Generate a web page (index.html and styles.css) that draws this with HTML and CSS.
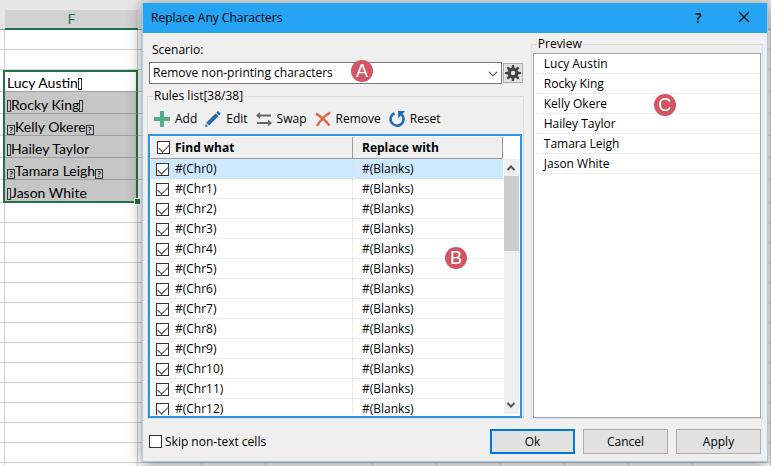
FILE: index.html
```html
<!DOCTYPE html>
<html lang="en">

<head>
    <meta charset="UTF-8">
    <meta name="viewport" content="width=device-width, initial-scale=1.0">
    <title>Replace Any Characters</title>
    <link rel="stylesheet" href="styles.css">
</head>

<body>
    <!-- Worksheet behind the dialog -->
    <table class="sheet">
        <thead>
            <tr>
                <th class="edge"></th>
                <th class="col-f">F</th>
                <th class="col"></th>
                <th class="col"></th>
                <th class="col-wide"></th>
                <th class="col"></th>
                <th class="col"></th>
                <th class="col"></th>
                <th class="col"></th>
                <th class="col"></th>
                <th></th>
            </tr>
        </thead>
        <tbody id="sheetRows"></tbody>
    </table>

    <div class="dialog" role="dialog" aria-labelledby="dialogTitle">
        <div class="title-bar">
            <span class="title" id="dialogTitle">Replace Any Characters</span>
            <button type="button" class="title-button help">?</button>
            <button type="button" class="title-button" aria-label="Close">
                <svg width="12" height="12" viewBox="0 0 12 12"><path d="M1 1L11 11M11 1L1 11" fill="none" stroke="#111" stroke-width="1.2"/></svg>
            </button>
        </div>

        <form class="content" id="replaceForm">
            <div class="panels">
                <div class="left-panel">
                    <label for="scenario">Scenario:</label>
                    <div class="scenario-row">
                        <div class="select-wrap">
                            <select id="scenario" name="scenario">
                                <option>Remove non-printing characters</option>
                            </select>
                            <svg class="arrow" width="10" height="6" viewBox="0 0 10 6"><path d="M1 .8L5 4.8L9 .8" fill="none" stroke="#444" stroke-width="1.1"/></svg>
                            <span class="badge badge-a">A</span>
                        </div>
                        <button type="button" class="gear-button" aria-label="Settings">
                            <svg width="16" height="16" viewBox="0 0 16 16"><g fill="#444"><path fill-rule="evenodd" d="M8 2.6a5.4 5.4 0 1 0 0 10.8a5.4 5.4 0 1 0 0-10.8zM8 5.8a2.2 2.2 0 1 1 0 4.4a2.2 2.2 0 1 1 0-4.4z"/><path id="tooth" d="M6.5 3.4L6.9 0H9.1L9.5 3.4z"/><use href="#tooth" transform="rotate(45 8 8)"/><use href="#tooth" transform="rotate(90 8 8)"/><use href="#tooth" transform="rotate(135 8 8)"/><use href="#tooth" transform="rotate(180 8 8)"/><use href="#tooth" transform="rotate(225 8 8)"/><use href="#tooth" transform="rotate(270 8 8)"/><use href="#tooth" transform="rotate(315 8 8)"/></g></svg>
                        </button>
                    </div>

                    <fieldset class="rules">
                        <legend>Rules list[38/38]</legend>
                        <div class="toolbar">
                            <button type="button">
                                <svg width="16" height="16" viewBox="0 0 16 16"><path d="M8 0V16M0 8H16" stroke="#53ad8a" stroke-width="4"/></svg>
                                Add
                            </button>
                            <button type="button">
                                <svg width="16" height="16" viewBox="0 0 16 16"><path d="M1.2 11.8L10.6 2.4L13.4 5.2L4 14.6zM11.4 1.6L13 0L15.8 2.8L14.2 4.4zM0 16L.8 12.8L3 15.2z" fill="#2c67ae"/></svg>
                                Edit
                            </button>
                            <button type="button">
                                <svg width="16" height="16" viewBox="0 0 16 16"><path d="M0 4.5L4 1V3.5H15V5.5H4V8zM16 12L12 8.5V11H1V13H12V15.5z" fill="#666"/></svg>
                                Swap
                            </button>
                            <button type="button">
                                <svg width="16" height="16" viewBox="0 0 16 16"><path d="M1 2.5C6 5.5 10.5 9.5 14.5 14.5M15 1.5C9.5 5 5 9.5 2 15" fill="none" stroke="#db6547" stroke-width="2.4"/></svg>
                                Remove
                            </button>
                            <button type="button">
                                <svg width="16" height="16" viewBox="0 0 16 16"><path d="M5.5 2.2A6.5 6.5 0 1 0 12.8 3.7" fill="none" stroke="#1f6dba" stroke-width="2.6"/><path d="M9 0H16L14 2.5L12.5 4L9.2 7z" fill="#1f6dba"/></svg>
                                Reset
                            </button>
                        </div>
                        <div class="list">
                            <div class="list-view">
                                <table class="rule-table">
                                    <thead>
                                        <tr>
                                            <th class="check"><input type="checkbox" aria-label="Select all rules" checked></th>
                                            <th class="find">Find what</th>
                                            <th>Replace with</th>
                                        </tr>
                                    </thead>
                                    <tbody id="ruleRows"></tbody>
                                </table>
                            </div>
                            <div class="scrollbar">
                                <svg width="10" height="8" viewBox="0 0 10 8"><path d="M1.5 6L5 2.5L8.5 6" fill="none" stroke="#555" stroke-width="2"/></svg>
                                <div class="thumb"></div>
                                <svg width="10" height="8" viewBox="0 0 10 8"><path d="M1.5 2L5 5.5L8.5 2" fill="none" stroke="#555" stroke-width="2"/></svg>
                            </div>
                            <span class="badge badge-b">B</span>
                        </div>
                    </fieldset>
                </div>

                <fieldset class="preview">
                    <legend>Preview</legend>
                    <ul class="preview-list">
                        <li>Lucy Austin</li>
                        <li>Rocky King</li>
                        <li>Kelly Okere</li>
                        <li>Hailey Taylor</li>
                        <li>Tamara Leigh</li>
                        <li>Jason White</li>
                    </ul>
                    <span class="badge badge-c">C</span>
                </fieldset>
            </div>

            <div class="footer">
                <label class="skip"><input type="checkbox" name="skip"> Skip non-text cells</label>
                <button type="submit" class="button primary">Ok</button>
                <button type="button" class="button">Cancel</button>
                <button type="button" class="button">Apply</button>
            </div>
        </form>
    </div>

    <script src="script.js"></script>
</body>

</html>
```

FILE: styles.css
```css
* {
    box-sizing: border-box;
}

body {
    margin: 0;
    height: 100vh;
    overflow: hidden;
    background-color: #fff;
    color: #000;
    font-family: "Open Sans", sans-serif;
    font-size: 12px;
    line-height: 16px;
}

button,
select {
    font: inherit;
    color: inherit;
}

/* Worksheet */
.sheet {
    width: 100%;
    table-layout: fixed;
    border-collapse: separate;
    border-spacing: 0;
    font-family: Lato, sans-serif;
    font-size: 14px;
}

.sheet th {
    height: 30px;
    padding: 10px 0 0;
    border-bottom: 1px solid #999;
    background-color: #e6e6e6;
    font-weight: normal;
}

.sheet .edge {
    width: 5px;
}

.sheet .col-f {
    width: 133px;
    border-bottom: 2px solid #217346;
    background: linear-gradient(#e6e6e6 10px, #d2d2d2 10px);
    color: #217346;
}

.sheet .col {
    width: 64px;
}

.sheet .col-wide {
    width: 107px;
}

.sheet td {
    height: 20px;
    padding: 0;
    border-right: 1px solid #d0d0d0;
    border-bottom: 1px solid #d0d0d0;
    white-space: nowrap;
}

.sheet .name-row td {
    height: 22px;
}

.sheet .name {
    padding: 4px 0 0 2px;
    border-right: 2px solid #217346;
    border-bottom-color: #a0a0a0;
    background-color: #c6c6c6;
    box-shadow: -2px 0 #217346;
    line-height: 17px;
}

.sheet .name.first {
    border-top: 2px solid #217346;
    background-color: #fff;
    padding-top: 2px;
}

.sheet .name.last {
    position: relative;
    border-bottom: 2px solid #217346;
}

.sheet .name.last::after {
    content: '';
    position: absolute;
    right: -5px;
    bottom: -4px;
    width: 5px;
    height: 5px;
    border: 1px solid #fff;
    box-sizing: content-box;
    background-color: #217346;
}

/* Unprintable characters show as an empty or a question box */
.box {
    display: inline-block;
    width: 4px;
    height: 12px;
    border: 1px solid #333;
    vertical-align: -2px;
}

.box.question {
    width: 8px;
    height: 10px;
    font-size: 8px;
    font-weight: bold;
    line-height: 8px;
    text-align: center;
    vertical-align: -1px;
}

/* Dialog */
.dialog {
    position: absolute;
    inset: 3px 3px 4px 142px;
    display: flex;
    flex-direction: column;
    border: 1px solid #9ccbe9;
    border-top: 0;
    background-color: #efefef;
    box-shadow: 0 2px 14px rgba(0, 0, 0, 0.45);
}

.title-bar {
    display: flex;
    align-items: center;
    height: 30px;
    padding: 0 1px 0 8px;
    background-color: #25a4f3;
}

.title {
    flex: 1;
}

.title-button {
    width: 45px;
    height: 30px;
    padding: 0;
    border: 0;
    background: none;
    line-height: 12px;
}

.title-button.help {
    font-size: 14px;
    font-weight: 600;
}

.content {
    flex: 1;
    display: flex;
    flex-direction: column;
    min-height: 0;
    padding: 0 4px 7px;
}

.panels {
    flex: 1;
    display: flex;
    gap: 7px;
    min-height: 0;
}

.left-panel {
    flex: 378;
    display: flex;
    flex-direction: column;
    min-width: 0;
    padding-top: 9px;
}

.left-panel > label {
    padding-left: 5px;
}

.scenario-row {
    display: flex;
    gap: 1px;
    margin: 4px 1px 4px 2px;
}

.select-wrap {
    position: relative;
    flex: 1;
}

.select-wrap select {
    width: 100%;
    height: 22px;
    padding: 0 3px;
    border: 1px solid #777;
    border-radius: 0;
    background-color: #fff;
    appearance: none;
}

.select-wrap .arrow {
    position: absolute;
    right: 4px;
    top: 9px;
    pointer-events: none;
}

.gear-button {
    display: flex;
    align-items: center;
    justify-content: center;
    width: 20px;
    height: 20px;
    margin: 1px 0;
    padding: 0;
    border: 1px solid #adadad;
    background-color: #e1e1e1;
}

fieldset {
    position: relative;
    display: flex;
    flex-direction: column;
    min-width: 0;
    min-height: 0;
    margin: 0;
    padding: 0;
    border: 1px solid #dcdcdc;
}

legend {
    margin-left: 5px;
    padding: 0 1px;
}

.rules {
    flex: 1;
}

.toolbar {
    display: flex;
    gap: 8px;
    height: 30px;
    padding-left: 6px;
}

.toolbar button {
    display: flex;
    align-items: center;
    gap: 5px;
    padding: 0;
    border: 0;
    background: none;
}

.list {
    position: relative;
    flex: 1;
    display: flex;
    min-height: 0;
    margin-right: 1px;
    padding: 1px 0 1px 1px;
    border: 2px solid #2e95e0;
    background-color: #fff;
}

.list-view {
    flex: 1;
    min-height: 0;
    overflow: hidden;
}

.rule-table {
    width: 100%;
    table-layout: fixed;
    border-collapse: separate;
    border-spacing: 0;
}

.rule-table th {
    height: 22px;
    padding: 0;
    border-bottom: 1px solid #999;
    background-color: #efefef;
    font-weight: bold;
    text-align: left;
}

.rule-table .check {
    width: 24px;
    padding-left: 5px;
}

.rule-table th.check {
    padding-left: 6px;
}

.rule-table .find {
    width: 178px;
}

.rule-table th.find,
.rule-table th:last-child {
    border-right: 1px solid #999;
}

.rule-table td {
    height: 20px;
    padding: 0;
    border-bottom: 1px dotted #ddd;
}

.rule-table td.check {
    padding-top: 2px;
}

.rule-table td.find {
    border-right: 1px dotted #ddd;
}

.rule-table th:last-child,
.rule-table td:last-child {
    padding-left: 9px;
}

.rule-table .selected td {
    background-color: #cde8ff;
}

input[type="checkbox"] {
    display: block;
    width: 13px;
    height: 13px;
    margin: 0;
    border: 1px solid #333;
    background-color: #fff;
    appearance: none;
}

input[type="checkbox"]:checked::before {
    content: '';
    display: block;
    width: 9px;
    height: 5px;
    margin: 2px 1px;
    border: solid #444;
    border-width: 0 0 1px 1px;
    transform: rotate(-45deg);
}

.scrollbar {
    display: flex;
    flex-direction: column;
    align-items: center;
    width: 15px;
    margin: 22px 1px 1px;
    padding: 5px 0;
    background-color: #efefef;
}

.thumb {
    width: 15px;
    height: 75px;
    margin: 4px 0 auto;
    background-color: #cdcdcd;
}

.preview {
    flex: 231;
    margin-top: 3px;
}

.preview legend {
    margin-left: 5px;
}

.preview-list {
    flex: 1;
    margin: 1px 1px 0;
    padding: 0 0 0 2px;
    border: 1px solid #a5a5ae;
    background-color: #fff;
    line-height: 20px;
    list-style: none;
}

.preview-list li {
    height: 20px;
    padding: 0 8px;
    border-bottom: 1px dotted #ddd;
}

/* Callout letters */
.badge {
    position: absolute;
    width: 22px;
    height: 22px;
    border-radius: 50%;
    background-color: #d25564;
    color: #fff;
    font-family: "Liberation Sans", Arial, sans-serif;
    font-size: 18px;
    line-height: 22px;
    text-align: center;
}

.badge-a {
    top: -2px;
    left: 202px;
}

.badge-b {
    top: 111px;
    left: 295px;
}

.badge-c {
    top: 42px;
    left: 122px;
}

/* Footer */
.footer {
    display: flex;
    align-items: center;
    gap: 8px;
    padding: 10px 2px 0;
}

.skip {
    flex: 1;
    display: flex;
    align-items: center;
    gap: 3px;
}

.button {
    width: 85px;
    height: 25px;
    padding: 0;
    border: 1px solid #adadad;
    background-color: #e1e1e1;
}

.button.primary {
    border: 2px solid #0078d7;
}
```

FILE: script.js
```js
const sheetRows = document.getElementById('sheetRows');
const ruleRows = document.getElementById('ruleRows');

const box = '<span class="box"></span>';
const question = '<span class="box question">?</span>';

const names = [
    'Lucy Austin' + box,
    box + 'Rocky King' + box,
    question + 'Kelly Okere' + question,
    box + 'Hailey Taylor',
    question + 'Tamara Leigh' + question,
    box + 'Jason White'
];

function addSheetRow(content, rowClass, cellClass) {
    const row = document.createElement('tr');
    row.className = rowClass;
    row.innerHTML = '<td></td><td class="' + cellClass + '">' + content + '</td>' + '<td></td>'.repeat(9);
    sheetRows.appendChild(row);
}

addSheetRow('', '', '');
addSheetRow('', '', '');
names.forEach(function (name, i) {
    const position = i === 0 ? ' first' : i === names.length - 1 ? ' last' : '';
    addSheetRow(name, 'name-row', 'name' + position);
});
for (let i = 0; i < 14; i++) {
    addSheetRow('', '', '');
}

for (let i = 0; i < 13; i++) {
    const row = document.createElement('tr');
    if (i === 0) {
        row.className = 'selected';
    }
    row.innerHTML =
        '<td class="check"><input type="checkbox" aria-label="Use rule #(Chr' + i + ')" checked></td>' +
        '<td class="find">#(Chr' + i + ')</td>' +
        '<td>#(Blanks)</td>';
    ruleRows.appendChild(row);
}
```
